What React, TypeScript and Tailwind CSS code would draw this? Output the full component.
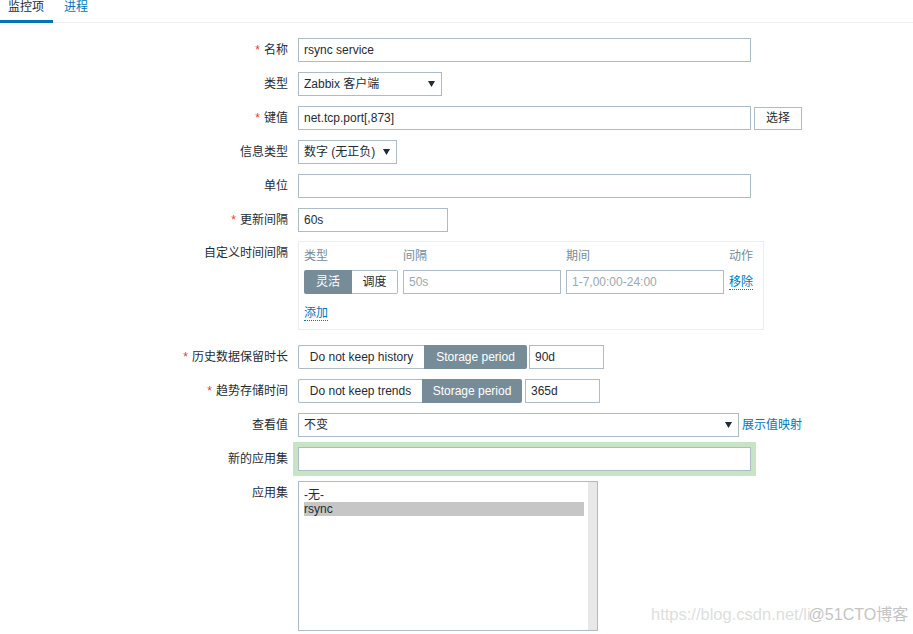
import React from "react";

const label = "w-[298px] shrink-0 pr-[10px] text-right leading-[24px]";
const input = "h-[24px] border border-[#acbbc4] bg-white px-[5px] leading-[22px]";

function Req() {
  return <span className="mr-[4px] text-[#e0402f]">*</span>;
}

function Arrow() {
  return (
    <svg width="7" height="6" viewBox="0 0 7 6" className="shrink-0">
      <path d="M0 0h7L3.5 6z" fill="#1f2c33" />
    </svg>
  );
}

function Select({ text, w }: { text: string; w: string }) {
  return (
    <div className={`${input} ${w} flex items-center justify-between pr-[6px]`}>
      <span>{text}</span>
      <Arrow />
    </div>
  );
}

function Row({ title, req, children, gap }: { title: string; req?: boolean; children: React.ReactNode; gap?: string }) {
  return (
    <div className={`flex items-start ${gap ?? "mb-[10px]"}`}>
      <div className={label}>
        {req && <Req />}
        {title}
      </div>
      <div className="flex items-center">{children}</div>
    </div>
  );
}

function Link({ children }: { children: React.ReactNode }) {
  return <span className="border-b border-dotted border-[#0275b8] leading-[14px] text-[#0275b8]">{children}</span>;
}

export default function App() {
  return (
    <div className="relative min-h-screen bg-white font-['Liberation_Sans','Noto_Sans_CJK_SC',sans-serif] text-[12px] text-[#1f2c33]">
      {/* tabs */}
      <div className="flex h-[23px] border-b border-[#ebeef0]">
        <div className="-mb-px w-[53px] border-b-[3px] border-[#0275b8] pl-[8px] leading-[14px]">监控项</div>
        <div className="pl-[11px] leading-[14px] text-[#0275b8]">进程</div>
      </div>

      <div className="pt-[15px]">
        <Row title="名称" req>
          <div className={`${input} w-[453px] border-[#5b7283]`}>rsync service</div>
        </Row>
        <Row title="类型">
          <Select text="Zabbix 客户端" w="w-[144px]" />
        </Row>
        <Row title="键值" req>
          <div className={`${input} w-[453px]`}>net.tcp.port[,873]</div>
          <div className="ml-[3px] flex h-[23px] w-[48px] items-center justify-center border border-[#acbbc4] bg-white">选择</div>
        </Row>
        <Row title="信息类型">
          <Select text="数字 (无正负)" w="w-[99px]" />
        </Row>
        <Row title="单位">
          <div className={`${input} w-[453px]`}></div>
        </Row>
        <Row title="更新间隔" req gap="mb-[9px]">
          <div className={`${input} w-[150px]`}>60s</div>
        </Row>
        <Row title="自定义时间间隔" gap="mb-[15px]">
          <div className="w-[466px] border border-[#ebeef0] px-[5px] pt-[5px] pb-[7px]">
            <div className="grid grid-cols-[94px_158px_158px_auto] gap-x-[5px] text-[#768d99]">
              <div className="leading-[18px]">类型</div>
              <div className="leading-[18px]">间隔</div>
              <div className="leading-[18px]">期间</div>
              <div className="leading-[18px]">动作</div>
            </div>
            <div className="mt-[5px] grid grid-cols-[94px_158px_158px_auto] items-center gap-x-[5px]">
              <div className="flex h-[24px]">
                <div className="flex w-[48px] items-center justify-center rounded-l-[2px] bg-[#768d99] text-white">灵活</div>
                <div className="flex w-[46px] items-center justify-center rounded-r-[2px] border border-l-0 border-[#acbbc4]">调度</div>
              </div>
              <div className={`${input} text-[#9aa8b1]`}>50s</div>
              <div className={`${input} text-[#9aa8b1]`}>1-7,00:00-24:00</div>
              <div>
                <Link>移除</Link>
              </div>
            </div>
            <div className="mt-[10px] leading-[18px]">
              <Link>添加</Link>
            </div>
          </div>
        </Row>
        <Row title="历史数据保留时长" req>
          <div className="flex h-[24px]">
            <div className="flex w-[126px] items-center justify-center rounded-l-[2px] border border-r-0 border-[#acbbc4]">Do not keep history</div>
            <div className="flex w-[103px] items-center justify-center rounded-r-[2px] bg-[#768d99] text-white">Storage period</div>
          </div>
          <div className={`${input} ml-[2px] w-[75px]`}>90d</div>
        </Row>
        <Row title="趋势存储时间" req>
          <div className="flex h-[24px]">
            <div className="flex w-[124px] items-center justify-center rounded-l-[2px] border border-r-0 border-[#acbbc4]">Do not keep trends</div>
            <div className="flex w-[100px] items-center justify-center rounded-r-[2px] bg-[#768d99] text-white">Storage period</div>
          </div>
          <div className={`${input} ml-[3px] w-[75px]`}>365d</div>
        </Row>
        <Row title="查看值">
          <Select text="不变" w="w-[441px]" />
          <span className="ml-[3px] text-[#0275b8]">展示值映射</span>
        </Row>
        <Row title="新的应用集">
          <div className={`${input} w-[453px] shadow-[0_0_0_5px_#c7e4c5]`}></div>
        </Row>
        <Row title="应用集">
          <div className="flex h-[150px] w-[300px] border border-[#acbbc4] bg-white">
            <div className="flex-1 pl-[5px] pr-[4px] pt-[6px] leading-[14px]">
              <div>-无-</div>
              <div className="bg-[#c6c6c6]">rsync</div>
            </div>
            <div className="w-[9px] bg-[#e8e8e8]"></div>
          </div>
        </Row>
      </div>

      {/* watermark */}
      <div className="pointer-events-none absolute left-[651px] top-[605px] flex items-baseline leading-[18px]">
        <span className="text-[16.5px] text-[#dedede]">https://blog.csdn.net/li</span>
        <span className="-ml-[2px] text-[16px] text-[#c4c4c4]">@51CTO博客</span>
      </div>
    </div>
  );
}
